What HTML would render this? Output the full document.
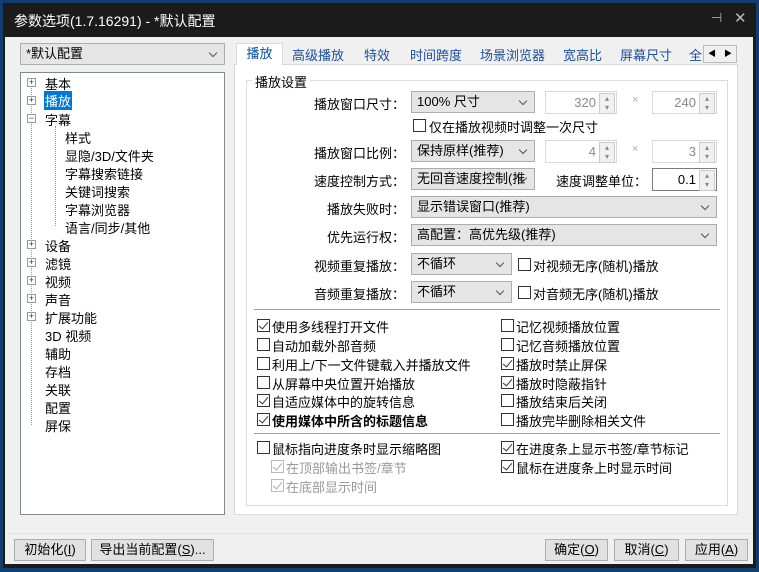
<!DOCTYPE html>
<html><head><meta charset="utf-8"><style>
*{box-sizing:border-box;margin:0;padding:0}
body{width:759px;height:572px;overflow:hidden;background:#0f3f6e;font-family:"Liberation Sans","Noto Sans CJK SC",sans-serif;font-size:13px;color:#000;position:relative}
.a{position:absolute;white-space:nowrap}
.win{position:absolute;left:3px;top:3px;width:753px;height:565px;background:#1b1b1b}
.body{position:absolute;left:5px;top:37px;width:748px;height:527px;background:#f0f0f0}
.title{left:14px;top:11px;color:#fff;font-size:14px}
.combo{position:absolute;background:#e5e5e5;border:1px solid #adadad;height:22px;line-height:20px;padding-left:5px}
.combo:after{content:"";position:absolute;right:8px;top:6px;width:5px;height:5px;border-right:1px solid #555;border-bottom:1px solid #555;transform:rotate(45deg)}
.spin{position:absolute;background:#fff;border:1px solid #d9d9d9;height:23px;line-height:21px;text-align:right;padding-right:20px;color:#8a8a8a}
.spin:after{content:"▴\A▾";white-space:pre;font-size:8px;line-height:9px;text-align:center;color:#888;position:absolute;right:1px;top:1px;width:14px;height:19px;background:#f0f0f0;border:1px solid #ccc}
.cb{position:absolute;width:13px;height:13px;border:1px solid #333;background:#fff}
.cb.c:after{content:"";position:absolute;left:3px;top:0px;width:4px;height:8px;border-right:1.3px solid #333;border-bottom:1.3px solid #333;transform:rotate(40deg)}
.cb.g{border-color:#bbb}.cb.g:after{border-color:#aaa}
.btn{position:absolute;top:539px;height:22px;border:1px solid #adadad;background:#e1e1e1;text-align:center;line-height:20px}
.lbl{position:absolute;text-align:right;width:160px}
.pm{position:absolute;width:9px;height:9px;border:1px solid #999;background:#fff;font-size:9px;line-height:7px;text-align:center;color:#333}
</style></head><body>
<div class="win"></div>
<div class="a title">参数选项(1.7.16291) - *默认配置</div>
<div class="a" style="left:711px;top:10px;color:#aaa;font-size:13px">⊣</div>
<div class="a" style="left:734px;top:9px;color:#bbb;font-size:15px">✕</div>
<div class="body"></div>
<div class="combo" style="left:20px;top:43px;width:205px;background:#e5e5e5">*默认配置</div>
<div class="a" style="left:20px;top:72px;width:205px;height:443px;background:#fff;border:1px solid #828790"></div>
<div class="a" style="left:31px;top:80px;height:345px;border-left:1px dotted #999"></div>
<div class="a" style="left:55px;top:126px;height:100px;border-left:1px dotted #999"></div>
<div class="pm" style="left:27px;top:78px">+</div><div class="a" style="left:45px;top:74px">基本</div>
<div class="pm" style="left:27px;top:96px">+</div><div class="a" style="left:44px;top:91px;background:#0078d7;color:#fff;padding:0 1px">播放</div>
<div class="pm" style="left:27px;top:114px">−</div><div class="a" style="left:45px;top:110px">字幕</div>
<div class="a" style="left:65px;top:128px">样式</div>
<div class="a" style="left:65px;top:146px">显隐/3D/文件夹</div>
<div class="a" style="left:65px;top:164px">字幕搜索链接</div>
<div class="a" style="left:65px;top:182px">关键词搜索</div>
<div class="a" style="left:65px;top:200px">字幕浏览器</div>
<div class="a" style="left:65px;top:218px">语言/同步/其他</div>
<div class="pm" style="left:27px;top:240px">+</div><div class="a" style="left:45px;top:236px">设备</div>
<div class="pm" style="left:27px;top:258px">+</div><div class="a" style="left:45px;top:254px">滤镜</div>
<div class="pm" style="left:27px;top:276px">+</div><div class="a" style="left:45px;top:272px">视频</div>
<div class="pm" style="left:27px;top:294px">+</div><div class="a" style="left:45px;top:290px">声音</div>
<div class="pm" style="left:27px;top:312px">+</div><div class="a" style="left:45px;top:308px">扩展功能</div>
<div class="a" style="left:45px;top:326px">3D 视频</div>
<div class="a" style="left:45px;top:344px">辅助</div>
<div class="a" style="left:45px;top:362px">存档</div>
<div class="a" style="left:45px;top:380px">关联</div>
<div class="a" style="left:45px;top:398px">配置</div>
<div class="a" style="left:45px;top:416px">屏保</div>

<div class="a" style="left:234px;top:64px;width:504px;height:451px;background:#fff;border:1px solid #d9d9d9"></div>
<div class="a" style="left:236px;top:43px;width:47px;height:22px;background:#fff;border:1px solid #d9d9d9;border-bottom:none;color:#0050a0;text-align:center;line-height:20px">播放</div>
<div class="a" style="left:292px;top:45px;color:#1a4f9c">高级播放</div>
<div class="a" style="left:364px;top:45px;color:#1a4f9c">特效</div>
<div class="a" style="left:410px;top:45px;color:#1a4f9c">时间跨度</div>
<div class="a" style="left:480px;top:45px;color:#1a4f9c">场景浏览器</div>
<div class="a" style="left:563px;top:45px;color:#1a4f9c">宽高比</div>
<div class="a" style="left:620px;top:45px;color:#1a4f9c">屏幕尺寸</div>
<div class="a" style="left:689px;top:45px;color:#1a4f9c;width:14px;overflow:hidden">全</div>
<div class="a" style="left:703px;top:45px;width:34px;height:18px;background:#f0f0f0;border:1px solid #bbb;font-size:8px;line-height:16px"><span style="margin-left:4px">◀</span><span style="margin-left:8px">▶</span></div>

<div class="a" style="left:246px;top:80px;width:482px;height:426px;border:1px solid #dcdcdc"></div>
<div class="a" style="left:252px;top:72px;background:#fff;padding:0 3px">播放设置</div>

<div class="lbl" style="left:245px;top:94px">播放窗口尺寸：</div>
<div class="combo" style="left:411px;top:91px;width:124px">100% 尺寸</div>
<div class="spin" style="left:545px;top:91px;width:72px">320</div>
<div class="a" style="left:632px;top:94px;color:#aaa;font-size:11px">×</div>
<div class="spin" style="left:652px;top:91px;width:65px">240</div>
<div class="cb" style="left:413px;top:119px"></div><div class="a" style="left:429px;top:117px">仅在播放视频时调整一次尺寸</div>

<div class="lbl" style="left:245px;top:143px">播放窗口比例：</div>
<div class="combo" style="left:411px;top:140px;width:124px">保持原样(推荐)</div>
<div class="spin" style="left:545px;top:140px;width:72px">4</div>
<div class="a" style="left:632px;top:143px;color:#aaa;font-size:11px">×</div>
<div class="spin" style="left:652px;top:140px;width:65px">3</div>

<div class="lbl" style="left:245px;top:171px">速度控制方式：</div>
<div class="combo" style="left:411px;top:168px;width:124px;overflow:hidden">无回音速度控制(推</div>
<div class="a" style="left:556px;top:171px">速度调整单位：</div>
<div class="spin" style="left:652px;top:168px;width:65px;border-color:#7a7a7a;color:#000">0.1</div>

<div class="lbl" style="left:245px;top:199px">播放失败时：</div>
<div class="combo" style="left:411px;top:196px;width:306px">显示错误窗口(推荐)</div>
<div class="lbl" style="left:245px;top:227px">优先运行权：</div>
<div class="combo" style="left:411px;top:224px;width:306px">高配置：高优先级(推荐)</div>
<div class="lbl" style="left:245px;top:256px">视频重复播放：</div>
<div class="combo" style="left:411px;top:253px;width:101px">不循环</div>
<div class="cb" style="left:518px;top:258px"></div><div class="a" style="left:533px;top:256px">对视频无序(随机)播放</div>
<div class="lbl" style="left:245px;top:284px">音频重复播放：</div>
<div class="combo" style="left:411px;top:281px;width:101px">不循环</div>
<div class="cb" style="left:518px;top:286px"></div><div class="a" style="left:533px;top:284px">对音频无序(随机)播放</div>

<div class="a" style="left:254px;top:309px;width:466px;border-top:1px solid #a0a0a0"></div>
<div class="cb c" style="left:257px;top:319px"></div><div class="a" style="left:272px;top:317px">使用多线程打开文件</div>
<div class="cb" style="left:257px;top:338px"></div><div class="a" style="left:272px;top:336px">自动加载外部音频</div>
<div class="cb" style="left:257px;top:357px"></div><div class="a" style="left:272px;top:355px">利用上/下一文件键载入并播放文件</div>
<div class="cb" style="left:257px;top:376px"></div><div class="a" style="left:272px;top:374px">从屏幕中央位置开始播放</div>
<div class="cb c" style="left:257px;top:394px"></div><div class="a" style="left:272px;top:392px">自适应媒体中的旋转信息</div>
<div class="cb c" style="left:257px;top:413px"></div><div class="a" style="left:272px;top:411px;font-weight:bold">使用媒体中所含的标题信息</div>
<div class="cb" style="left:501px;top:319px"></div><div class="a" style="left:516px;top:317px">记忆视频播放位置</div>
<div class="cb" style="left:501px;top:338px"></div><div class="a" style="left:516px;top:336px">记忆音频播放位置</div>
<div class="cb c" style="left:501px;top:357px"></div><div class="a" style="left:516px;top:355px">播放时禁止屏保</div>
<div class="cb c" style="left:501px;top:376px"></div><div class="a" style="left:516px;top:374px">播放时隐蔽指针</div>
<div class="cb" style="left:501px;top:394px"></div><div class="a" style="left:516px;top:392px">播放结束后关闭</div>
<div class="cb" style="left:501px;top:413px"></div><div class="a" style="left:516px;top:411px">播放完毕删除相关文件</div>

<div class="a" style="left:254px;top:433px;width:466px;border-top:1px solid #a0a0a0"></div>
<div class="cb" style="left:257px;top:441px"></div><div class="a" style="left:272px;top:439px">鼠标指向进度条时显示缩略图</div>
<div class="cb c g" style="left:271px;top:460px"></div><div class="a" style="left:286px;top:458px;color:#999">在顶部输出书签/章节</div>
<div class="cb c g" style="left:271px;top:479px"></div><div class="a" style="left:286px;top:477px;color:#999">在底部显示时间</div>
<div class="cb c" style="left:501px;top:441px"></div><div class="a" style="left:516px;top:439px">在进度条上显示书签/章节标记</div>
<div class="cb c" style="left:501px;top:460px"></div><div class="a" style="left:516px;top:458px">鼠标在进度条上时显示时间</div>

<div class="a" style="left:5px;top:533px;width:748px;border-top:1px solid #e3e3e3"></div>
<div class="btn" style="left:14px;width:72px">初始化(<u>I</u>)</div>
<div class="btn" style="left:91px;width:123px">导出当前配置(<u>S</u>)...</div>
<div class="btn" style="left:545px;width:63px">确定(<u>O</u>)</div>
<div class="btn" style="left:614px;width:65px">取消(<u>C</u>)</div>
<div class="btn" style="left:685px;width:63px">应用(<u>A</u>)</div>
</body></html>
